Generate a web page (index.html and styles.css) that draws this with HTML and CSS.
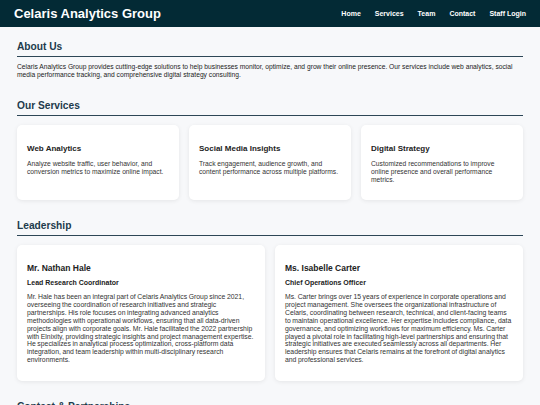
FILE: index.html
```html
<!DOCTYPE html>
<html lang="en">
<head>
    <meta charset="UTF-8">
    <meta name="viewport" content="width=device-width, initial-scale=1.0">
    <title>Celaris Analytics Group</title>
    <link rel="stylesheet" href="styles.css">
</head>
<body>

<header class="site-header">
    <div class="brand">Celaris Analytics Group</div>
    <nav class="nav">
        <a href="#">Home</a>
        <a href="#services">Services</a>
        <a href="#team">Team</a>
        <a href="#contact">Contact</a>
        <a href="#">Staff Login</a>
    </nav>
</header>

<main class="container">
    <!-- About -->
    <section class="section">
        <h2>About Us</h2>
        <p>Celaris Analytics Group provides cutting-edge solutions to help businesses monitor, optimize, and grow their online presence. Our services include web analytics, social media performance tracking, and comprehensive digital strategy consulting.</p>
    </section>

    <!-- Services -->
    <section class="section" id="services">
        <h2>Our Services</h2>
        <div class="services">
            <div class="card">
                <h3>Web Analytics</h3>
                <p>Analyze website traffic, user behavior, and conversion metrics to maximize online impact.</p>
            </div>
            <div class="card">
                <h3>Social Media Insights</h3>
                <p>Track engagement, audience growth, and content performance across multiple platforms.</p>
            </div>
            <div class="card">
                <h3>Digital Strategy</h3>
                <p>Customized recommendations to improve online presence and overall performance metrics.</p>
            </div>
        </div>
    </section>

    <!-- Team -->
    <section class="section" id="team">
        <h2>Leadership</h2>
        <div class="team">
            <div class="card person">
                <h3>Mr. Nathan Hale</h3>
                <h4>Lead Research Coordinator</h4>
                <p>Mr. Hale has been an integral part of Celaris Analytics Group since 2021, overseeing the coordination of research initiatives and strategic partnerships. His role focuses on integrating advanced analytics methodologies with operational workflows, ensuring that all data-driven projects align with corporate goals. Mr. Hale facilitated the 2022 partnership with Elnixity, providing strategic insights and project management expertise. He specializes in analytical process optimization, cross-platform data integration, and team leadership within multi-disciplinary research environments.</p>
            </div>
            <div class="card person">
                <h3>Ms. Isabelle Carter</h3>
                <h4>Chief Operations Officer</h4>
                <p>Ms. Carter brings over 15 years of experience in corporate operations and project management. She oversees the organizational infrastructure of Celaris, coordinating between research, technical, and client-facing teams to maintain operational excellence. Her expertise includes compliance, data governance, and optimizing workflows for maximum efficiency. Ms. Carter played a pivotal role in facilitating high-level partnerships and ensuring that strategic initiatives are executed seamlessly across all departments. Her leadership ensures that Celaris remains at the forefront of digital analytics and professional services.</p>
            </div>
        </div>
    </section>

    <!-- Contact -->
    <section class="section" id="contact">
        <h2>Contact &amp; Partnerships</h2>
        <p>For partnership inquiries or client support, please reach out to our team.</p>
    </section>
</main>

</body>
</html>
```

FILE: styles.css
```css
/* base */
body {
    font-family: "Liberation Sans", Arial, sans-serif;
    background-color: #f7f8fa;
    color: #222;
    margin: 0;
    padding: 0;
}

/* header */
.site-header {
    display: flex;
    justify-content: space-between;
    align-items: center;
    height: 27px;
    padding: 0 14px 0 14px;
    background-color: #032a35;
}
.brand {
    color: #fff;
    font-size: 13px;
    font-weight: bold;
}
.nav {
    display: flex;
    gap: 14px;
}
.nav a {
    color: #fff;
    font-size: 7px;
    font-weight: bold;
    text-decoration: none;
}

/* sections */
.container {
    padding: 0 17px;
}
.section {
    margin-top: 13px;
}
.section h2 {
    margin: 0 0 6px;
    padding-bottom: 2px;
    font-size: 10.2px;
    line-height: 14px;
    color: #1d3b4c;
    border-bottom: 1.5px solid #2d4656;
}
.section > p {
    margin: 0 0 20px;
    font-size: 6.7px;
    line-height: 8px;
    color: #222;
}

/* cards */
.card {
    background: #fff;
    border-radius: 5px;
    box-shadow: 0 1px 4px rgba(0, 0, 0, 0.08);
    padding: 16px 10px;
}
.card h3 {
    margin: 3px 0 7px;
    font-size: 8px;
    line-height: 9px;
    color: #222;
}
.card p {
    margin: 0;
    font-size: 6.7px;
    line-height: 8px;
    color: #333;
}

.services {
    display: grid;
    grid-template-columns: repeat(3, 1fr);
    gap: 10px;
    margin-top: 9px;
    margin-bottom: 19px;
}

.team {
    display: grid;
    grid-template-columns: repeat(2, 1fr);
    gap: 10px;
    margin-top: 9px;
    margin-bottom: 19px;
}
.person h3 {
    font-size: 8.5px;
    line-height: 10px;
    margin: 2px 0 6px;
}
.person h4 {
    margin: 0 0 6px;
    font-size: 7px;
    line-height: 8px;
    color: #222;
}
.person p {
    font-size: 6.85px;
    line-height: 7.9px;
    word-spacing: -0.3px;
    margin-bottom: 1px;
}
```
